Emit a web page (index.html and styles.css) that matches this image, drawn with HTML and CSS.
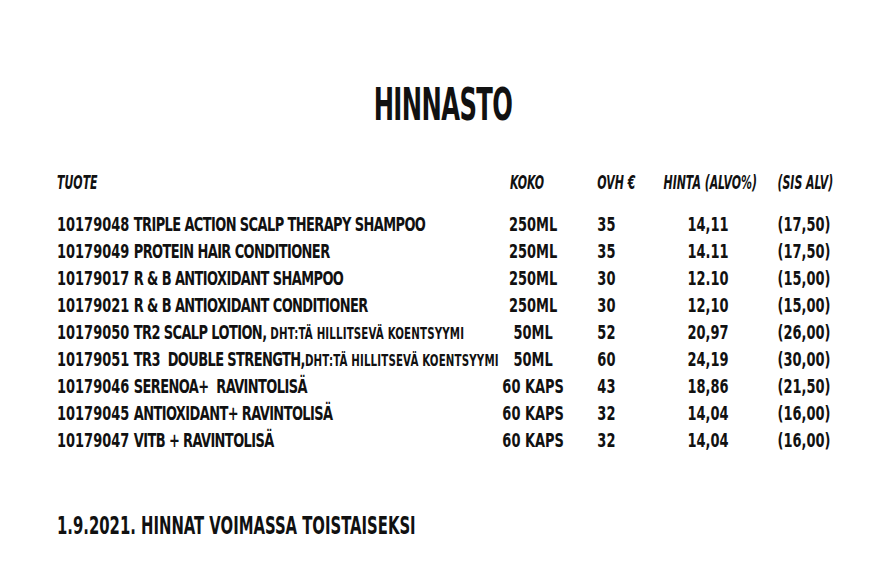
FILE: index.html
```html
<!DOCTYPE html>
<html lang="fi">
<head>
<meta charset="utf-8">
<title>Hinnasto</title>
<link rel="stylesheet" href="styles.css">
</head>
<body>
<main class="page">
  <h1 class="title">HINNASTO</h1>
  <div class="table">
    <div class="row head">
      <span class="c-code">TUOTE</span>
      <span class="c-name"></span>
      <span class="c-koko">KOKO</span>
      <span class="c-ovh">OVH €</span>
      <span class="c-hinta">HINTA (ALVO%)</span>
      <span class="c-sis">(SIS ALV)</span>
    </div>
    <div class="row"><span class="c-code">10179048</span><span class="c-name">TRIPLE ACTION SCALP THERAPY SHAMPOO</span><span class="c-koko">250ML</span><span class="c-ovh">35</span><span class="c-hinta">14,11</span><span class="c-sis">(17,50)</span></div>
    <div class="row"><span class="c-code">10179049</span><span class="c-name">PROTEIN HAIR CONDITIONER</span><span class="c-koko">250ML</span><span class="c-ovh">35</span><span class="c-hinta">14.11</span><span class="c-sis">(17,50)</span></div>
    <div class="row"><span class="c-code">10179017</span><span class="c-name">R &amp; B ANTIOXIDANT SHAMPOO</span><span class="c-koko">250ML</span><span class="c-ovh">30</span><span class="c-hinta">12.10</span><span class="c-sis">(15,00)</span></div>
    <div class="row"><span class="c-code">10179021</span><span class="c-name">R &amp; B ANTIOXIDANT CONDITIONER</span><span class="c-koko">250ML</span><span class="c-ovh">30</span><span class="c-hinta">12,10</span><span class="c-sis">(15,00)</span></div>
    <div class="row"><span class="c-code">10179050</span><span class="c-name">TR2 SCALP LOTION, <small>DHT:TÄ HILLITSEVÄ KOENTSYYMI</small></span><span class="c-koko">50ML</span><span class="c-ovh">52</span><span class="c-hinta">20,97</span><span class="c-sis">(26,00)</span></div>
    <div class="row"><span class="c-code">10179051</span><span class="c-name">TR3&nbsp; DOUBLE STRENGTH,<small>DHT:TÄ HILLITSEVÄ KOENTSYYMI</small></span><span class="c-koko">50ML</span><span class="c-ovh">60</span><span class="c-hinta">24,19</span><span class="c-sis">(30,00)</span></div>
    <div class="row"><span class="c-code">10179046</span><span class="c-name">SERENOA+&nbsp; RAVINTOLISÄ</span><span class="c-koko">60 KAPS</span><span class="c-ovh">43</span><span class="c-hinta">18,86</span><span class="c-sis">(21,50)</span></div>
    <div class="row"><span class="c-code">10179045</span><span class="c-name">ANTIOXIDANT+ RAVINTOLISÄ</span><span class="c-koko">60 KAPS</span><span class="c-ovh">32</span><span class="c-hinta">14,04</span><span class="c-sis">(16,00)</span></div>
    <div class="row"><span class="c-code">10179047</span><span class="c-name">VITB + RAVINTOLISÄ</span><span class="c-koko">60 KAPS</span><span class="c-ovh">32</span><span class="c-hinta">14,04</span><span class="c-sis">(16,00)</span></div>
  </div>
  <p class="footer">1.9.2021. HINNAT VOIMASSA TOISTAISEKSI</p>
</main>
</body>
</html>
```
FILE: styles.css
```css
html, body {
  margin: 0;
  padding: 0;
  background: #fff;
}
body {
  width: 886px;
  height: 566px;
  overflow: hidden;
  color: #111;
  font-family: "DejaVu Sans Condensed", "DejaVu Sans", sans-serif;
  font-weight: bold;
}
.page {
  padding: 0 0 0 57px;
}
.title {
  margin: 0 0 0 -57px;
  padding-top: 80px;
  text-align: center;
  font-size: 45px;
  line-height: 50px;
  font-weight: bold;
  letter-spacing: -1px;
  transform: scaleX(0.6);
  transform-origin: 443px 0;
}
.table {
  margin-top: 39px;
  width: 1090px;
  transform: scaleX(0.76);
  transform-origin: 0 0;
}
.row {
  display: grid;
  grid-template-columns: 101px 482px 87px 128px 117px 176px;
  height: 27px;
  line-height: 27px;
  font-size: 19px;
  white-space: nowrap;
}
.row.head {
  font-style: italic;
  font-size: 20px;
  height: 42px;
  line-height: 26px;
}
.row.head span {
  transform: scaleX(0.8);
  transform-origin: 0 50%;
}
.c-name {
  letter-spacing: -0.8px;
}
.c-koko { text-align: center; }
.c-ovh { padding-left: 41px; }
.c-hinta { text-align: center; }
.c-sis { padding-left: 33px; }
.row.head .c-ovh { transform-origin: 41px 50%; }
.row.head .c-sis { transform-origin: 33px 50%; }
.row.head .c-koko { text-align: left; padding-left: 13px; transform-origin: 13px 50%; }
.head .c-hinta { text-align: left; }
.c-name small {
  font-size: 15px;
  letter-spacing: 0.2px;
}
.footer {
  margin: 57px 0 0 0;
  font-size: 25px;
  line-height: 30px;
  white-space: nowrap;
  transform: scaleX(0.66);
  transform-origin: 0 0;
}
```
